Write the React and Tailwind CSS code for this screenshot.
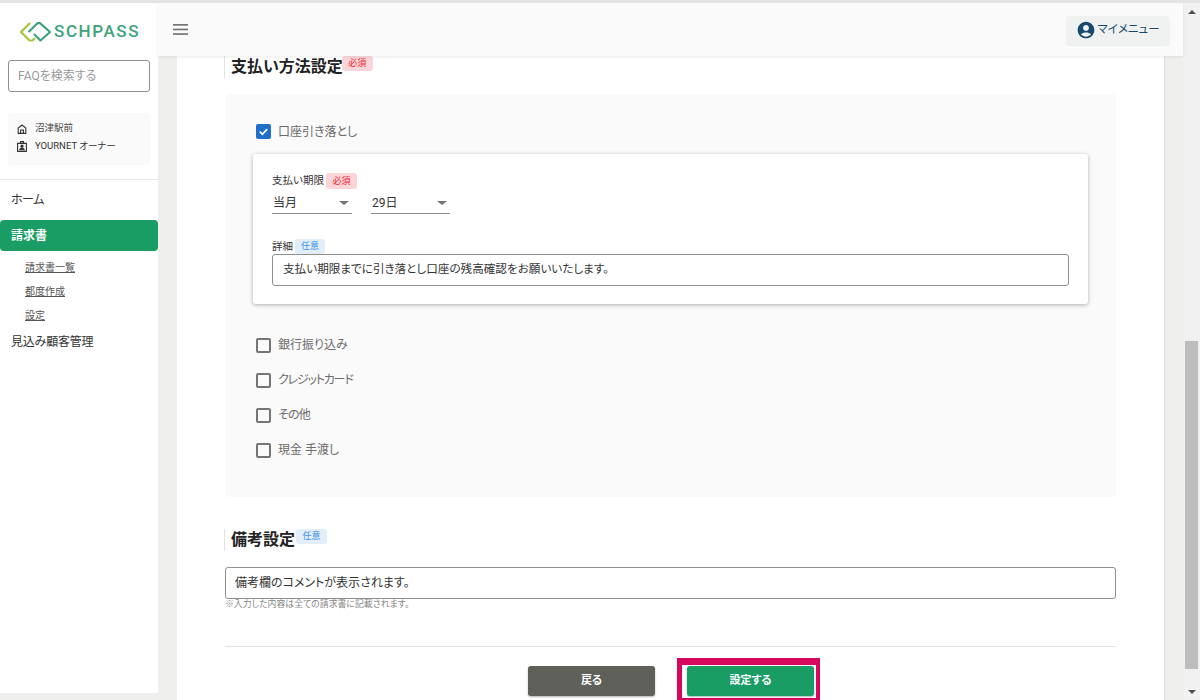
import React from "react";

const font = "font-['Roboto','Noto_Sans_CJK_JP',sans-serif] [font-feature-settings:'palt']";

const Badge = ({ kind, className = "" }) => (
  <span
    className={`inline-flex items-center justify-center rounded-[3px] text-[9px] leading-none ${
      kind === "required" ? "bg-[#fbd5d8] text-[#ee2a36]" : "bg-[#e3eef9] text-[#3d93ee]"
    } ${className}`}
  >
    {kind === "required" ? "必須" : "任意"}
  </span>
);

const Check = ({ checked, label, labelClass = "" }) => (
  <label className="flex items-center h-[20px] pl-[31px] gap-[8px]">
    {checked ? (
      <span className="w-[15px] h-[15px] rounded-[2px] bg-[#1f6fc9] flex items-center justify-center">
        <svg width="11" height="11" viewBox="0 0 12 12" fill="none">
          <path d="M2 6.2 4.8 9 10 3.4" stroke="#fff" strokeWidth="1.8" />
        </svg>
      </span>
    ) : (
      <span className="w-[15px] h-[15px] rounded-[2px] border-2 border-[#757575]" />
    )}
    <span className={`text-[12px] text-[#6b6b6b] -ml-px ${labelClass}`}>{label}</span>
  </label>
);

const SelectBox = ({ value, className }) => (
  <div className={`h-[25px] border-b border-[#8a8a8a] flex items-end pb-[1px] justify-between pl-px pr-[3px] text-[12px] text-[#333] ${className}`}>
    <span>{value}</span>
    <span className="w-0 h-0 mb-[7px] border-x-[5px] border-x-transparent border-t-[4px] border-t-[#757575]" />
  </div>
);

const Heading = ({ title, kind, badgeClass }) => (
  <div className="flex items-start border-l border-[#e2e2e2] -ml-px pl-[6px] h-[22px]">
    <h2 className="text-[16px] leading-[20px] font-bold text-[#222] mt-px">{title}</h2>
    <Badge kind={kind} className={badgeClass} />
  </div>
);

const Logo = () => (
  <svg width="31" height="20" viewBox="0 0 31 20" fill="none" strokeWidth="2.2" strokeLinejoin="round">
    <path d="M10 1 1 10l8.5 8.5h3l2.500-2.500" stroke="#a4c639" />
    <path d="M8.500 10 17.500 1.200h2.500L30 10l-9.500 8.500L14 12" stroke="#3ea27b" />
  </svg>
);

export default function App() {
  return (
    <div className={`${font} flex h-[700px] w-[1200px] overflow-hidden bg-[#eff0ee] border-t-[3px] border-[#e4e4e4]`}>
      <aside className="w-[158px] h-[690px] shrink-0 bg-white flex flex-col">
        <div className="h-[53px] flex items-center pl-[20px] pt-[5px] gap-[3px]">
          <Logo />
          <span className="text-[17px] font-medium tracking-[1.6px] text-[#3ea27b]">SCHPASS</span>
        </div>
        <div className="mx-[8px] mt-[4px] h-[32px] border border-[#8f8f8f] rounded-[3px] flex items-center pl-[9px] text-[12px] text-[#9a9a9a]">
          FAQを検索する
        </div>
        <div className="mx-[8px] mt-[21px] h-[52px] bg-[#fafafa] rounded-[3px] pl-[9px] pt-[8px] text-[#444] text-[9.5px] flex flex-col gap-[3px]">
          <div className="flex items-center gap-[8px] h-[15px]">
            <svg width="10" height="10" viewBox="0 0 10 10" fill="none" stroke="#333" strokeWidth="1.1">
              <path d="M1.2 9.4V4L5 1l3.800 3v5.400zM3.600 9.400V6h2.800v3.400" />
            </svg>
            <span>沼津駅前</span>
          </div>
          <div className="flex items-center gap-[8px] h-[15px]">
            <svg width="10" height="11" viewBox="0 0 10 11" fill="none" stroke="#333" strokeWidth="1.1">
              <path d="M.6 2.400h8.800v8H.6zM3.500 2.400V.6h3v1.800" />
              <circle cx="5" cy="5.2" r="1.1" fill="#333" />
              <path d="M2.800 8.600c.4-1.600 4-1.600 4.400 0z" fill="#333" />
            </svg>
            <span className="text-[#333]">YOURNET オーナー</span>
          </div>
        </div>
        <div className="mt-[14px] border-t border-[#e8e8e8]" />
        <nav className="mt-[10px] text-[12px] text-[#333]">
          <div className="h-[20px] flex items-center pl-[11px] tracking-[-0.5px]">ホーム</div>
          <div className="mt-[10px] h-[31px] bg-[#1a9c65] rounded-[4px] flex items-center pl-[11px] text-white font-bold">請求書</div>
          <div className="mt-[9px] pl-[25px] flex flex-col gap-[9px] text-[10px] text-[#555] underline leading-[15px]">
            <a>請求書一覧</a>
            <a>都度作成</a>
            <a>設定</a>
          </div>
          <div className="mt-[9px] h-[20px] flex items-center pl-[11px] tracking-[-0.2px]">見込み顧客管理</div>
        </nav>
      </aside>

      <div className="flex-1 min-w-0 flex flex-col">
        <header className="relative z-10 h-[53px] shrink-0 bg-[#fafafa] shadow-[0_1px_3px_rgba(0,0,0,0.08)] flex items-center justify-between pl-[15px] pr-[13px]">
          <svg width="15" height="11" viewBox="0 0 15 11" fill="#757575">
            <rect width="15" height="1.700" />
            <rect y="4.600" width="15" height="1.700" />
            <rect y="9.200" width="15" height="1.700" />
          </svg>
          <div className="w-[104px] h-[29px] mt-[1px] rounded-[4px] bg-[#eff2f0] shadow-[0_1px_1px_rgba(0,0,0,0.06)] flex items-center justify-center gap-[1px] text-[#174a6e] text-[11.5px]">
            <svg width="20" height="20" viewBox="0 0 24 24" fill="#174a6e">
              <path d="M12 2C6.48 2 2 6.48 2 12s4.480 10 10 10 10-4.480 10-10S17.520 2 12 2zm0 4c1.930 0 3.500 1.570 3.500 3.500S13.930 13 12 13s-3.500-1.570-3.500-3.500S10.070 6 12 6zm0 14c-2.030 0-4.430-.820-6.140-2.880C7.550 15.800 9.680 15 12 15s4.450.800 6.140 2.120C16.430 19.180 14.030 20 12 20z" />
            </svg>
            <span>マイメニュー</span>
          </div>
        </header>

        <main className="mx-[19px] flex-1 bg-white px-[48px] flex flex-col shadow-[1px_0_1px_rgba(0,0,0,0.08)]">
          <Heading title="支払い方法設定" kind="required" badgeClass="w-[31px] h-[15px] -ml-px" />

          <section className="mt-[16px] h-[403px] bg-[#fafafa] rounded-[4px] pt-[27px]">
            <Check checked label="口座引き落とし" labelClass="translate-y-px" />
            <div className="mx-[28px] mt-[13px] h-[150px] bg-white rounded-[3px] shadow-[0_1px_4px_rgba(0,0,0,0.3)] px-[19px] pt-[19px]">
              <div className="flex items-center h-[16px] text-[10.5px] text-[#333]">
                <span>支払い期限</span>
                <Badge kind="required" className="w-[31px] h-[16px] ml-[2px]" />
              </div>
              <div className="flex gap-[19px]">
                <SelectBox value="当月" className="w-[80px]" />
                <SelectBox value="29日" className="w-[79px]" />
              </div>
              <div className="flex items-center h-[15px] mt-[25px] text-[10.5px] text-[#333]">
                <span>詳細</span>
                <Badge kind="optional" className="w-[30px] h-[15px] ml-[2px]" />
              </div>
              <div className="h-[32px] border border-[#8f8f8f] rounded-[3px] flex items-center pl-[10px] text-[11.6px] text-[#333]">
                支払い期限までに引き落とし口座の残高確認をお願いいたします。
              </div>
            </div>
            <div className="mt-[31px] flex flex-col gap-[15px]">
              <Check label="銀行振り込み" />
              <Check label="クレジットカード" labelClass="tracking-[-1.2px]" />
              <Check label="その他" labelClass="tracking-[-0.8px]" />
              <Check label="現金 手渡し" />
            </div>
          </section>

          <div className="mt-[32px]">
            <Heading title="備考設定" kind="optional" badgeClass="w-[31px] h-[15px] ml-[1px]" />
          </div>
          <div className="mt-[16px] h-[32px] border border-[#8f8f8f] rounded-[3px] flex items-center pl-[9px] text-[12px] text-[#333]">
            備考欄のコメントが表示されます。
          </div>
          <p className="text-[8.9px] leading-[11px] text-[#888]">※入力した内容は全ての請求書に記載されます。</p>
          <div className="mt-[36px] border-t border-[#e4e4e4]" />
          <div className="mt-[11px] flex justify-center gap-[22px] pl-[7px]">
            <button className="mt-[8px] w-[127px] h-[30px] rounded-[3px] bg-[#5f605a] text-white text-[11px] font-bold shadow-[0_1px_2px_rgba(0,0,0,0.3)]">戻る</button>
            <div className="border-l-[5px] border-r-[4px] border-t-[7px] border-b-[2px] border-[#d6085e] pl-[5px] pr-[2px] pt-px h-[42px] -mb-[4px] flex items-start">
              <button className="w-[127px] h-[30px] rounded-[3px] bg-[#1a9c65] text-white text-[11px] font-bold shadow-[0_1px_2px_rgba(0,0,0,0.3)]">設定する</button>
            </div>
          </div>
        </main>
      </div>

      <div className="w-[17px] shrink-0 bg-[#f1f1f1] flex flex-col items-center pt-[7px] pb-[6px]">
        <span className="w-0 h-0 border-x-[4px] border-x-transparent border-b-[4px] border-b-[#505050]" />
        <div className="w-[13px] h-[328px] mt-[327px] bg-[#bdbdbd]" />
        <span className="w-0 h-0 mt-auto border-x-[4px] border-x-transparent border-t-[4px] border-t-[#505050]" />
      </div>
    </div>
  );
}
